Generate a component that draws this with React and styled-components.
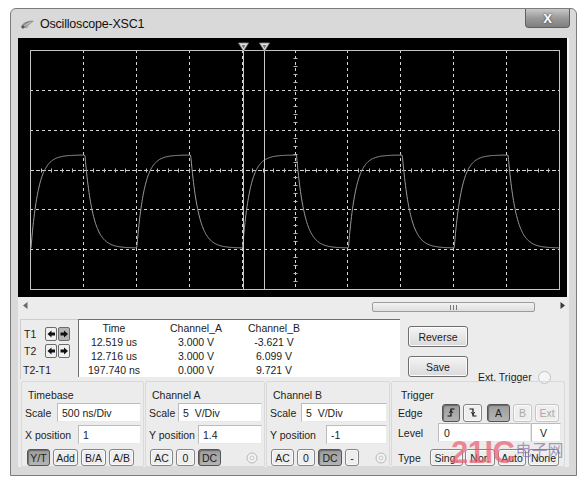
import React from 'react'
import styled, { createGlobalStyle } from 'styled-components'

const GlobalStyle = createGlobalStyle`
    body {
        margin: 0;
        background: #fff;
        font-family: "Liberation Sans", Arial, sans-serif;
        font-size: 10.5px;
        color: #1c1c1c;
    }
`

const Page = styled.div`
    padding: 8px 0 0 10px;
`

const Window = styled.div`
    position: relative;
    width: 567px;
    height: 468px;
    box-sizing: border-box;
    border: 1px solid #7c7c7c;
    border-radius: 6px 6px 0 0;
    background: #d9d9d9;
    display: flex;
    flex-direction: column;
    padding: 0 7px 8px 7px;
`

const TitleBar = styled.div`
    height: 29px;
    flex: none;
    display: flex;
    align-items: center;
    margin: 0 -1px 0 2px;
`

const TitleText = styled.span`
    margin-left: 5px;
    font-size: 12.5px;
    letter-spacing: -0.2px;
    color: #111;
`

const CloseButton = styled.div`
    margin-left: auto;
    align-self: flex-start;
    width: 45px;
    height: 19px;
    box-sizing: border-box;
    border: 1px solid #5f5f5f;
    border-top: none;
    border-radius: 0 0 4px 4px;
    background: linear-gradient(#c9c9c9, #9a9a9a 50%, #7e7e7e);
    display: flex;
    align-items: center;
    justify-content: center;
    color: #fff;
    font-weight: bold;
    font-size: 13px;
    text-shadow: 0 0 2px #333;
`

const Client = styled.div`
    flex: 1;
    display: flex;
    flex-direction: column;
    background: #ececec;
`

const Screen = styled.div`
    height: 259px;
    flex: none;
    background: #000;
    border-right: 2px solid #f4f4f4;
    svg { display: block; }
`

const ScrollBar = styled.div`
    height: 17px;
    flex: none;
    display: flex;
    align-items: center;
    padding: 0 4px 0 5px;
`

const Track = styled.div`
    flex: 1;
    display: flex;
    align-items: center;
    padding-top: 3px;
`

const Thumb = styled.div`
    margin-left: ${p => p.$offset}px;
    width: ${p => p.$width}px;
    height: 10px;
    box-sizing: border-box;
    border: 1px solid #9c9c9c;
    border-radius: 2px;
    background: linear-gradient(#f2f2f2, #dedede);
    display: flex;
    align-items: center;
    justify-content: center;
    gap: 2px;

    span {
        width: 1px;
        height: 5px;
        background: #777;
    }
`

const ReadoutRow = styled.div`
    height: 67px;
    flex: none;
    display: flex;
    align-items: flex-start;
    padding: 5px 0 0 2px;
    box-sizing: border-box;
`

const TBox = styled.div`
    width: 58px;
    height: 60px;
    box-sizing: border-box;
    border-left: 1px solid #cdcdcd;
    border-top: 1px solid #cdcdcd;
    padding: 7px 0 0 3px;
    display: flex;
    flex-direction: column;
`

const TRow = styled.div`
    display: flex;
    align-items: center;
    height: 14px;
    margin-top: ${p => p.$mt || 0}px;
`

const TLabel = styled.span`
    width: 21px;
    flex: none;
    white-space: nowrap;
    margin-left: ${p => p.$ml || 0}px;
`

const ArrowButton = styled.div`
    width: 12px;
    height: 14px;
    box-sizing: border-box;
    margin-right: 1px;
    border: 1px solid #6c6c6c;
    border-radius: 2px;
    background: ${p => p.$pressed ? '#b4b4b4' : '#f0f0f0'};
    display: flex;
    align-items: center;
    justify-content: center;
`

const DataBox = styled.div`
    width: 322px;
    height: 58px;
    box-sizing: border-box;
    background: #fff;
    border-top: 1px solid #6e6e6e;
    border-left: 1px solid #6e6e6e;
    padding-top: 1px;
    display: grid;
    grid-template-columns: 70px 94px 62px;
    grid-auto-rows: 14px;
    line-height: 14px;
    text-align: center;
`

const ButtonColumn = styled.div`
    width: 60px;
    margin-left: 8px;
    padding-top: 7px;
    display: flex;
    flex-direction: column;
    gap: 9px;
`

const PushButton = styled.div`
    height: 21px;
    box-sizing: border-box;
    border: 1px solid #6f6f6f;
    border-radius: 3px;
    background: linear-gradient(#f4f4f4, #dadada);
    box-shadow: inset 0 0 0 1px #fbfbfb;
    display: flex;
    align-items: center;
    justify-content: center;
`

const ExtTrigger = styled.div`
    margin: 51px 0 0 10px;
    height: 14px;
    display: flex;
    align-items: center;
    gap: 6px;
`

const Radio = styled.span`
    width: 11px;
    height: 11px;
    border-radius: 50%;
    border: 1px solid #c2c2c2;
    background: #f5f5f5;
`

const ControlsRow = styled.div`
    height: 86px;
    flex: none;
    display: grid;
    grid-template-columns: 123px 120px 124px 174px;
    column-gap: 1px;
    padding-left: 3px;
`

const Group = styled.div`
    box-sizing: border-box;
    border: 1px solid #d9d9d9;
    border-radius: 2px;
    padding: 6px 2px 0 ${p => p.$pl || 3}px;
    display: flex;
    flex-direction: column;
`

const GroupTitle = styled.div`
    height: 14px;
    line-height: 14px;
    margin-left: 3px;
`

const FieldRow = styled.div`
    height: 19px;
    margin-top: ${p => p.$mt}px;
    display: flex;
    align-items: center;
    justify-content: ${p => p.$left ? 'flex-start' : 'space-between'};
`

const Label = styled.span`
    width: ${p => p.$w ? `${p.$w}px` : 'auto'};
    flex: none;
`

const Field = styled.div`
    width: ${p => p.$w}px;
    height: 19px;
    box-sizing: border-box;
    background: #fff;
    border: 1px solid;
    border-color: #bcbcbc #e9e9e9 #e9e9e9 #bcbcbc;
    padding-left: ${p => p.$pl || 4}px;
    display: flex;
    align-items: center;
`

const ButtonRow = styled.div`
    height: ${p => p.$h || 17}px;
    margin-top: ${p => p.$mt || 0}px;
    padding-left: ${p => p.$pl || 0}px;
    display: flex;
    align-items: center;
`

const SmallButton = styled.div`
    width: ${p => p.$w}px;
    height: 100%;
    margin-left: ${p => p.$gap || 0}px;
    box-sizing: border-box;
    border: 1px solid ${p => p.$disabled ? '#c6c6c6' : p.$pressed ? '#555' : '#858585'};
    border-radius: 3px;
    background: ${p => p.$pressed ? 'linear-gradient(#9c9c9c, #b4b4b4)' : '#eeeeee'};
    box-shadow: ${p => p.$pressed ? 'inset 1px 1px 1px #6a6a6a' : 'inset 0 0 0 1px #fafafa'};
    color: ${p => p.$disabled ? '#a9a9a9' : '#1c1c1c'};
    display: flex;
    align-items: center;
    justify-content: center;
    overflow: hidden;
    white-space: nowrap;
`

const GroundIcon = styled.svg`
    margin-left: auto;
    margin-right: ${p => p.$mr}px;
`

const Watermark = styled.div`
    position: absolute;
    left: 440px;
    top: 428px;
    display: flex;
    align-items: flex-start;
    pointer-events: none;
`

const WatermarkBig = styled.span`
    font-size: 31px;
    line-height: 31px;
    font-weight: bold;
    letter-spacing: -0.5px;
    color: rgba(232, 96, 116, 0.72);
`

const WatermarkSmall = styled.span`
    margin: 3px 0 0 1px;
    font-family: "Noto Sans CJK SC", sans-serif;
    font-size: 16px;
    line-height: 18px;
    color: rgba(130, 110, 165, 0.7);
`

// scope drawing
const SW = 549
const SH = 259
const GX = 12
const GY = 12
const GW = 529
const GH = 239
const DX = GW / 10
const DY = GH / 6

function wavePath() {
    const period = DX * 2
    const half = period / 2
    const hi = 117
    const lo = 210
    const amp = lo - hi
    let d = ''
    for (let x = GX + 1; x <= GX + GW; x += 0.5) {
        const t = (((x - 13) % period) + period) % period
        let y
        if (t < half + 1) {
            y = lo - amp * (1 - Math.exp(-t / 7.5))
        } else {
            y = hi + amp * (1 - Math.exp(-(t - half - 1) / 8))
        }
        d += (d ? 'L' : 'M') + x.toFixed(1) + ' ' + y.toFixed(1)
    }
    return d
}

function ScopeDisplay() {
    const vlines = []
    for (let i = 1; i < 10; i++) {
        const x = Math.round(GX + DX * i) + 0.5
        vlines.push(<line key={'v' + i} x1={x} y1={GY} x2={x} y2={GY + GH} stroke="#d4d4d4" strokeDasharray="3 3" />)
    }
    const hlines = []
    for (let j = 1; j < 6; j++) {
        const y = Math.round(GY + DY * j) + 0.5
        hlines.push(<line key={'h' + j} x1={GX} y1={y} x2={GX + GW} y2={y} stroke="#d4d4d4" strokeDasharray={j === 3 ? '4 2' : '3 3'} />)
    }
    const ticks = []
    const cy = Math.round(GY + DY * 3) + 0.5
    const cx = Math.round(GX + DX * 5) + 0.5
    for (let k = 1; k < 50; k++) {
        const x = Math.round(GX + (DX / 5) * k) + 0.5
        ticks.push(<line key={'tx' + k} x1={x} y1={cy - 2} x2={x} y2={cy + 2} stroke="#bdbdbd" />)
    }
    for (let k = 1; k < 30; k++) {
        const y = Math.round(GY + (DY / 5) * k) + 0.5
        ticks.push(<line key={'ty' + k} x1={cx - 2} y1={y} x2={cx + 2} y2={y} stroke="#bdbdbd" />)
    }
    const cursors = [225.5, 246.5]
    return (
        <svg width={SW} height={SH} viewBox={`0 0 ${SW} ${SH}`}>
            {vlines}
            {hlines}
            {ticks}
            <rect x={GX + 0.5} y={GY + 0.5} width={GW} height={GH} fill="none" stroke="#c4c4c4" />
            <path d={wavePath()} fill="none" stroke="#9a9a9a" strokeWidth="1" />
            {cursors.map(x => (
                <g key={x}>
                    <line x1={x} y1={GY} x2={x} y2={GY + GH} stroke="#c8c8c8" />
                    <polygon points={`${x - 5},5 ${x + 5},5 ${x},13`} fill="#e0e0e0" stroke="#8a8a8a" strokeWidth="0.8" />
                    <polygon points={`${x - 2},7 ${x + 2},7 ${x},10.5`} fill="#7a7a7a" />
                </g>
            ))}
        </svg>
    )
}

function TitleIcon() {
    return (
        <svg width="15" height="10" viewBox="0 0 15 10">
            <path d="M1 8 C3 3 8 1 14 2 C11 4 9 6 7 9 Z" fill="#8c8c8c" />
            <path d="M4 7 L11 3 M6 8 L12 4" stroke="#d4d4d4" strokeWidth="0.8" />
            <circle cx="3" cy="8" r="1.6" fill="#555" />
        </svg>
    )
}

function Arrow({ dir }) {
    const d = dir === 'left'
        ? 'M0.5 4 L4.5 0.5 V2.6 H8 V5.4 H4.5 V7.5 Z'
        : 'M8 4 L4 0.5 V2.6 H0.5 V5.4 H4 V7.5 Z'
    return (
        <svg width="9" height="8" viewBox="0 0 9 8">
            <path d={d} fill="#111" />
        </svg>
    )
}

function EdgeIcon({ falling }) {
    const d = falling ? 'M1.5 2 H5 V9 H8.5' : 'M1.5 9 H5 V2 H8.5'
    return (
        <svg width="10" height="11" viewBox="0 0 10 11">
            <path d={d} fill="none" stroke="#111" strokeWidth="1.2" />
            <path d={falling ? 'M3.2 5.2 L5 7.4 L6.8 5.2' : 'M3.2 5.8 L5 3.6 L6.8 5.8'} fill="none" stroke="#111" strokeWidth="1" />
        </svg>
    )
}

function Ground({ mr }) {
    return (
        <GroundIcon $mr={mr} width="12" height="12" viewBox="0 0 12 12">
            <circle cx="6" cy="6" r="5" fill="#f2f2f2" stroke="#b8b8b8" />
            <circle cx="6" cy="6" r="2" fill="none" stroke="#c6c6c6" />
        </GroundIcon>
    )
}

const readout = [
    ['Time', 'Channel_A', 'Channel_B'],
    ['12.519 us', '3.000 V', '-3.621 V'],
    ['12.716 us', '3.000 V', '6.099 V'],
    ['197.740 ns', '0.000 V', '9.721 V'],
]

export default function App() {
    return (
        <>
            <GlobalStyle />
            <Page>
                <Window>
                    <TitleBar>
                        <TitleIcon />
                        <TitleText>Oscilloscope-XSC1</TitleText>
                        <CloseButton>X</CloseButton>
                    </TitleBar>

                    <Client>
                        <Screen>
                            <ScopeDisplay />
                        </Screen>

                        <ScrollBar>
                            <svg width="5" height="7" viewBox="0 0 5 7"><path d="M4.5 0 V7 L0 3.5 Z" fill="#6a6a6a" /></svg>
                            <Track>
                                <Thumb $offset={344} $width={163}>
                                    <span /><span /><span />
                                </Thumb>
                            </Track>
                            <svg width="5" height="7" viewBox="0 0 5 7"><path d="M0.5 0 V7 L5 3.5 Z" fill="#3a3a3a" /></svg>
                        </ScrollBar>

                        <ReadoutRow>
                            <TBox>
                                <TRow>
                                    <TLabel>T1</TLabel>
                                    <ArrowButton><Arrow dir="left" /></ArrowButton>
                                    <ArrowButton $pressed><Arrow dir="right" /></ArrowButton>
                                </TRow>
                                <TRow $mt={3}>
                                    <TLabel>T2</TLabel>
                                    <ArrowButton><Arrow dir="left" /></ArrowButton>
                                    <ArrowButton><Arrow dir="right" /></ArrowButton>
                                </TRow>
                                <TRow $mt={5}>
                                    <TLabel $ml={-1}>T2-T1</TLabel>
                                </TRow>
                            </TBox>

                            <DataBox>
                                {readout.map(row => row.map((cell, i) => <span key={row[0] + i}>{cell}</span>))}
                            </DataBox>

                            <ButtonColumn>
                                <PushButton>Reverse</PushButton>
                                <PushButton>Save</PushButton>
                            </ButtonColumn>

                            <ExtTrigger>
                                Ext. Trigger
                                <Radio />
                            </ExtTrigger>
                        </ReadoutRow>

                        <ControlsRow>
                            <Group>
                                <GroupTitle>Timebase</GroupTitle>
                                <FieldRow $mt={1}>
                                    <Label>Scale</Label>
                                    <Field $w={84}>500 ns/Div</Field>
                                </FieldRow>
                                <FieldRow $mt={3}>
                                    <Label>X position</Label>
                                    <Field $w={63}>1</Field>
                                </FieldRow>
                                <ButtonRow $mt={5} $pl={2}>
                                    <SmallButton $w={23} $pressed>Y/T</SmallButton>
                                    <SmallButton $w={25} $gap={3}>Add</SmallButton>
                                    <SmallButton $w={25} $gap={3}>B/A</SmallButton>
                                    <SmallButton $w={25} $gap={3}>A/B</SmallButton>
                                </ButtonRow>
                            </Group>

                            <Group>
                                <GroupTitle>Channel A</GroupTitle>
                                <FieldRow $mt={1}>
                                    <Label>Scale</Label>
                                    <Field $w={84}>5&nbsp;&nbsp;V/Div</Field>
                                </FieldRow>
                                <FieldRow $mt={3}>
                                    <Label>Y position</Label>
                                    <Field $w={64}>1.4</Field>
                                </FieldRow>
                                <ButtonRow $mt={5} $pl={1}>
                                    <SmallButton $w={23}>AC</SmallButton>
                                    <SmallButton $w={19} $gap={3}>0</SmallButton>
                                    <SmallButton $w={23} $gap={3} $pressed>DC</SmallButton>
                                    <Ground mr={4} />
                                </ButtonRow>
                            </Group>

                            <Group>
                                <GroupTitle>Channel B</GroupTitle>
                                <FieldRow $mt={1}>
                                    <Label>Scale</Label>
                                    <Field $w={86}>5&nbsp;&nbsp;V/Div</Field>
                                </FieldRow>
                                <FieldRow $mt={3}>
                                    <Label>Y position</Label>
                                    <Field $w={61}>-1</Field>
                                </FieldRow>
                                <ButtonRow $mt={5} $pl={1}>
                                    <SmallButton $w={23}>AC</SmallButton>
                                    <SmallButton $w={18} $gap={3}>0</SmallButton>
                                    <SmallButton $w={24} $gap={3} $pressed>DC</SmallButton>
                                    <SmallButton $w={14} $gap={3}>-</SmallButton>
                                    <Ground mr={0} />
                                </ButtonRow>
                            </Group>

                            <Group $pl={6}>
                                <GroupTitle>Trigger</GroupTitle>
                                <FieldRow $mt={1} $left>
                                    <Label $w={44}>Edge</Label>
                                    <ButtonRow $h={18}>
                                        <SmallButton $w={18} $pressed><EdgeIcon /></SmallButton>
                                        <SmallButton $w={19} $gap={3}><EdgeIcon falling /></SmallButton>
                                        <SmallButton $w={23} $gap={5} $pressed>A</SmallButton>
                                        <SmallButton $w={19} $gap={3} $disabled>B</SmallButton>
                                        <SmallButton $w={24} $gap={3} $disabled>Ext</SmallButton>
                                    </ButtonRow>
                                </FieldRow>
                                <FieldRow $mt={1} $left>
                                    <Label $w={40}>Level</Label>
                                    <Field $w={93} $pl={5}>0</Field>
                                    <Field $w={30} $pl={8}>V</Field>
                                </FieldRow>
                                <ButtonRow $mt={7}>
                                    <Label $w={32}>Type</Label>
                                    <SmallButton $w={33}>Sing.</SmallButton>
                                    <SmallButton $w={30} $gap={2}>Nor.</SmallButton>
                                    <SmallButton $w={28} $gap={3}>Auto</SmallButton>
                                    <SmallButton $w={31} $gap={2}>None</SmallButton>
                                </ButtonRow>
                            </Group>
                        </ControlsRow>
                    </Client>

                    <Watermark>
                        <WatermarkBig>21IC</WatermarkBig>
                        <WatermarkSmall>电子网</WatermarkSmall>
                    </Watermark>
                </Window>
            </Page>
        </>
    )
}
